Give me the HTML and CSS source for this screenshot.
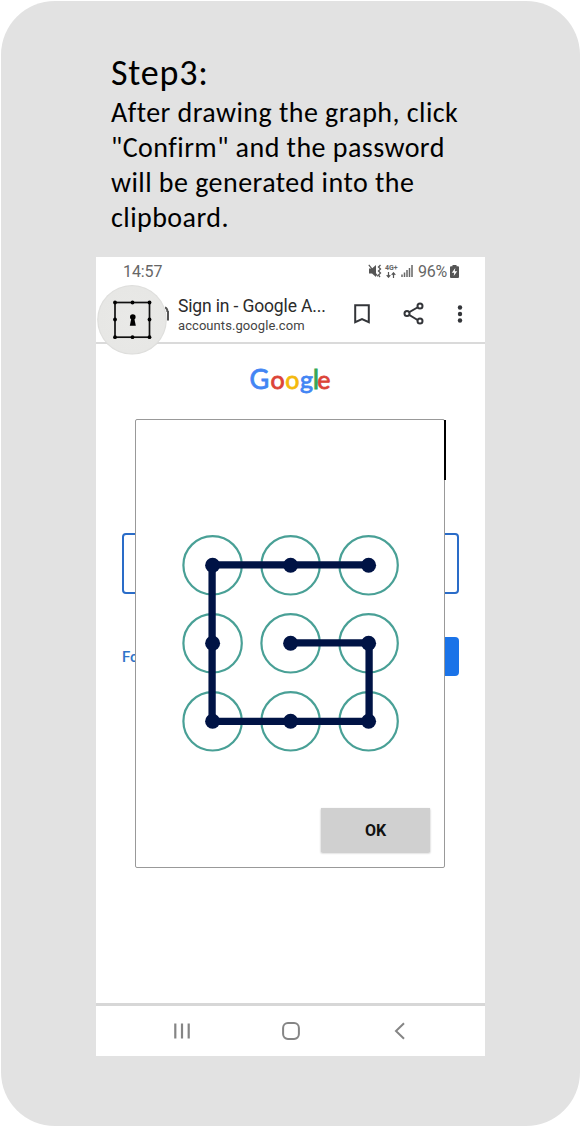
FILE: index.html
```html
<!DOCTYPE html>
<html lang="en">
<head>
<meta charset="utf-8">
<title>Step 3</title>
<link rel="stylesheet" href="styles.css">
</head>
<body>
<main class="card">
  <header class="intro">
    <h1 class="step">Step3:</h1>
    <p class="copy">
      <span class="line">After drawing the graph, click</span>
      <span class="line">"Confirm" and the password</span>
      <span class="line">will be generated into the</span>
      <span class="line">clipboard.</span>
    </p>
  </header>
  <section class="phone">
    <div class="status">
      <span class="time">14:57</span>
      <div class="indicators">
        <svg width="14" height="14" viewBox="0 0 14 14"><path d="M1 4.500h3L8 1v12L4 9.500H1z" fill="#555"/><path d="M.8.8l9 11.500" stroke="#555" stroke-width="1.200"/><path d="M12.500 1l-2 2 2 2-2 2 2 2-2 2 1.500 2" fill="none" stroke="#555" stroke-width="1.300"/></svg>
        <div class="net"><span>4G+</span>
          <svg width="10" height="6" viewBox="0 0 10 6"><path d="M2.500 0v5M.7 3.200l1.800 2 1.800-2M7.500 6V1M5.700 2.800l1.800-2 1.800 2" fill="none" stroke="#555" stroke-width="1.200"/></svg>
        </div>
        <svg class="signal" width="12" height="12" viewBox="0 0 12 12"><path d="M1 12V9.500M3.500 12V7.500M6 12V5M8.500 12V3M11 12V0" stroke="#666" stroke-width="1.500"/></svg>
        <span class="pct">96%</span>
        <svg class="battery" width="9" height="13" viewBox="0 0 9 13"><path d="M2.500 0h4v1.200H8q1 0 1 1V12q0 1-1 1H1q-1 0-1-1V2.200q0-1 1-1h1.500z" fill="#555"/><path d="M5.300 3L1.800 7.800h2.400L3.700 11l3.500-4.800H4.800z" fill="#fff"/></svg>
      </div>
    </div>
    <div class="toolbar">
      <svg class="lock" width="5" height="16" viewBox="0 0 5 16"><path d="M0 1.500q2.500 1 2.500 4.500M3 5v9.500" fill="none" stroke="#555" stroke-width="2"/></svg>
      <div class="site">
        <div class="title">Sign in - Google A...</div>
        <div class="url">accounts.google.com</div>
      </div>
      <svg class="bookmark" width="16" height="20" viewBox="0 0 16 20"><path d="M1.200 1.200h13.600v17L8 15.200l-6.800 3z" fill="none" stroke="#333539" stroke-width="2"/></svg>
      <svg class="share" width="22" height="24" viewBox="0 0 22 24"><path d="M17 4L4 11.500l13 8" fill="none" stroke="#333539" stroke-width="2"/><g fill="#fff" stroke="#333539" stroke-width="2"><circle cx="17" cy="4" r="2.500"/><circle cx="4" cy="11.500" r="2.500"/><circle cx="17" cy="19" r="2.500"/></g></svg>
      <svg class="more" width="6" height="18" viewBox="0 0 6 18" fill="#333539"><circle cx="3" cy="2.500" r="2.200"/><circle cx="3" cy="9" r="2.200"/><circle cx="3" cy="15.500" r="2.200"/></svg>
    </div>
    <div class="page">
      <svg class="logo" width="84" height="36" viewBox="0 0 84 36">
        <g stroke-width=".8">
          <text class="big" x="0.500" y="24" fill="#4285f4" stroke="#4285f4">G</text>
          <text x="21.500" y="24" fill="#dc4337" stroke="#dc4337">o</text>
          <text x="36.300" y="24" fill="#f4b90b" stroke="#f4b90b">o</text>
          <text x="51" y="24" fill="#4285f4" stroke="#4285f4">g</text>
          <text class="big" x="63.700" y="24" fill="#34a853" stroke="#34a853">l</text>
          <text x="68.300" y="24" fill="#dc4337" stroke="#dc4337">e</text>
        </g>
      </svg>
      <div class="field"></div>
      <div class="actions"><span class="forgot">Forgot email?</span><span class="next"></span></div>
    </div>
    <nav class="nav">
      <svg width="18" height="18" viewBox="0 0 18 18"><path d="M2.300 1.500v15M9 1.500v15M15.700 1.500v15" stroke="#858585" stroke-width="2.200"/></svg>
      <svg width="18" height="18" viewBox="0 0 18 18"><rect x="1.100" y="1.100" width="15.800" height="15.800" rx="4.800" fill="none" stroke="#858585" stroke-width="2"/></svg>
      <svg width="18" height="18" viewBox="0 0 18 18"><path d="M13 1.300L5 9l8 7.700" fill="none" stroke="#858585" stroke-width="2"/></svg>
    </nav>
    <svg class="bubble" width="72" height="72" viewBox="0 0 72 72">
      <defs>
        <radialGradient id="disc"><stop offset="0" stop-color="#e9e9e7"/><stop offset=".95" stop-color="#e7e7e5"/><stop offset="1" stop-color="#d9d9d7"/></radialGradient>
      </defs>
      <circle cx="36" cy="34.800" r="34.800" fill="url(#disc)"/>
      <rect x="19" y="17.500" width="34.500" height="34.700" fill="none" stroke="#111" stroke-width="1.700"/>
      <g fill="#000"><circle cx="19" cy="17.500" r="1.900"/><circle cx="36.500" cy="17.500" r="1.900"/><circle cx="53.500" cy="17.500" r="1.900"/><circle cx="19" cy="34.500" r="1.900"/><circle cx="53.500" cy="34.500" r="1.900"/><circle cx="19" cy="52.200" r="1.900"/><circle cx="36.500" cy="52.200" r="1.900"/><circle cx="53.500" cy="52.200" r="1.900"/><circle cx="36.800" cy="32" r="2.800"/><path d="M35.500 32.500h2.600l1.700 8.300h-6z"/></g>
    </svg>
    <div class="dialog">
      <svg class="pattern" width="220" height="220" viewBox="0.4 -0.3 220 220">
        <g fill="none" stroke="#49a096" stroke-width="2.200">
          <circle cx="32" cy="32" r="29.200"/><circle cx="110" cy="32" r="29.200"/><circle cx="188" cy="32" r="29.200"/>
          <circle cx="32" cy="110" r="29.200"/><circle cx="110" cy="110" r="29.200"/><circle cx="188" cy="110" r="29.200"/>
          <circle cx="32" cy="188" r="29.200"/><circle cx="110" cy="188" r="29.200"/><circle cx="188" cy="188" r="29.200"/>
        </g>
        <path d="M188 31.500H31.500V188H188.500V109.500H110" fill="none" stroke="#001345" stroke-width="7.300"/>
        <g fill="#001345">
          <circle cx="32" cy="32" r="7.500"/><circle cx="110" cy="32" r="7.500"/><circle cx="188" cy="32" r="7.500"/>
          <circle cx="32" cy="110" r="7.500"/><circle cx="110" cy="110" r="7.500"/><circle cx="188" cy="110" r="7.500"/>
          <circle cx="32" cy="188" r="7.500"/><circle cx="110" cy="188" r="7.500"/><circle cx="188" cy="188" r="7.500"/>
        </g>
      </svg>
      <button class="ok">OK</button>
    </div>
  </section>
</main>
</body>
</html>
```
FILE: styles.css
```css
* { box-sizing: border-box; }
body { margin: 0; background: #fff; font-family: Roboto, sans-serif; }
svg { display: block; flex: none; }
.card { width: 579px; height: 1125px; margin: 1px; border-radius: 54px; background: #e2e2e2; display: flow-root; }
.intro { height: 256px; padding: 50px 0 0 110px; font-family: Calibri, Carlito, Lato, sans-serif; color: #000; }
.step { margin: 0; font-weight: 400; font-size: 36px; line-height: 44px; letter-spacing: .8px; }
.copy { margin: 0; font-size: 28px; line-height: 35px; letter-spacing: .45px; }
.line { display: block; white-space: nowrap; }
.phone { position: relative; width: 389px; height: 799px; margin-left: 95px; background: #fff; display: flex; flex-direction: column; overflow: hidden; }
.status { height: 28px; display: flex; align-items: center; justify-content: space-between; padding: 0 26px 0 27px; color: #666; font-size: 16px; }
.time { letter-spacing: -.1px; }
.indicators { display: flex; align-items: center; gap: 3px; }
.net { display: flex; flex-direction: column; align-items: center; width: 13px; font-size: 7px; line-height: 7px; font-weight: 700; }
.pct { margin-left: 2px; font-size: 16px; letter-spacing: -.2px; }
.toolbar { height: 59px; padding-left: 69px; display: flex; align-items: center; border-bottom: 2px solid #dadada; color: #2b2b2b; }
.site { width: 154px; margin-left: 8px; padding-top: 3px; white-space: nowrap; }
.title { font-size: 17.500px; line-height: 21px; letter-spacing: -.15px; }
.url { font-size: 13px; line-height: 18px; letter-spacing: .07px; color: #444; }
.bookmark { margin-left: 22px; }
.share { margin-left: 33px; }
.more { margin-left: 32px; }
.page { flex: 1; display: flex; flex-direction: column; align-items: center; padding-top: 21px; }
.logo { font-family: Lato, sans-serif; font-size: 25px; font-weight: 400; overflow: visible; }
.big { font-size: 27px; }
.field { width: 337px; height: 61px; margin-top: 132px; border: 2px solid #2a6cc8; border-radius: 4px; }
.actions { width: 337px; height: 39px; margin-top: 43px; display: flex; justify-content: space-between; align-items: center; }
.forgot { color: #2f74c9; font-size: 15px; font-weight: 500; }
.next { width: 86px; height: 39px; background: #1a73e8; border-radius: 4px; }
.nav { height: 53px; border-top: 3px solid #d7d7d7; display: flex; justify-content: center; align-items: center; gap: 91px; }
.bubble { position: absolute; left: 0; top: 28px; }
.dialog { position: absolute; left: 39px; top: 162px; width: 310px; height: 449px; padding: 113px 14px 15px 45px; background: #fff; border: 1px solid #999; border-radius: 2px; display: flex; flex-direction: column; justify-content: space-between; }
.dialog::after { content: ""; position: absolute; right: -2px; top: 0; width: 2px; height: 60px; background: #000; }
.ok { align-self: flex-end; width: 109px; height: 44px; border: 0; background: #d0d0d0; box-shadow: 0 1px 2px #bbb; font: 700 16px Roboto, sans-serif; color: #111; padding: 0; }
```
